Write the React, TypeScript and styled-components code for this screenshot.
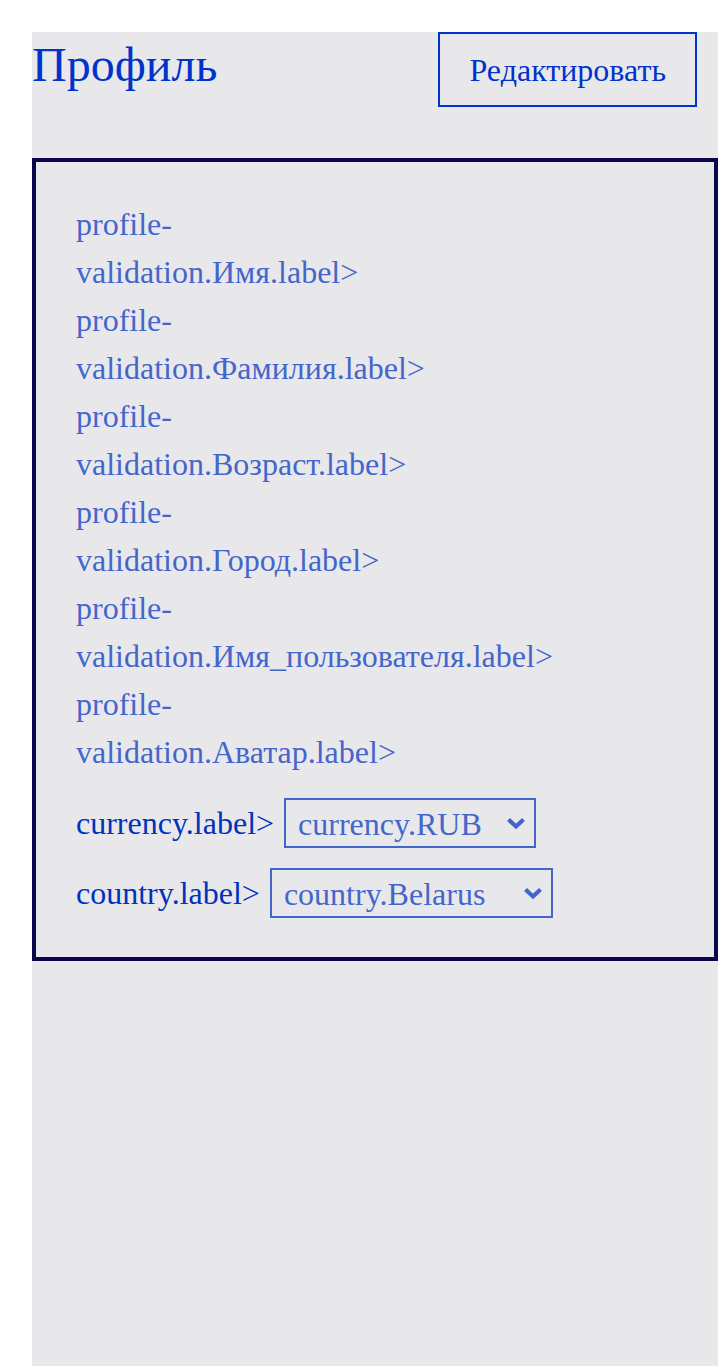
import React from 'react'
import styled, { createGlobalStyle } from 'styled-components'

const GlobalStyle = createGlobalStyle`
  html, body {
    margin: 0;
    padding: 0;
    background: #ffffff;
  }
  body {
    font-family: "Liberation Serif", "Times New Roman", serif;
  }
`

interface iSelect {
    w: number
    value: string
    options: string[]
}

const fields = ['Имя', 'Фамилия', 'Возраст', 'Город', 'Имя_пользователя', 'Аватар']

const Chevron = () => (
    <ChevronIcon width="20" height="13" viewBox="0 0 20 13">
        <polyline points="2.5,3 10,10 17.5,3" fill="none" stroke="#4466cc" strokeWidth="4.2" />
    </ChevronIcon>
)

const Select: React.FC<iSelect> = ({ w, value, options }) => {
    return (
        <SelectBox w={w}>
            <NativeSelect defaultValue={value}>
                {options.map((o) => (
                    <option key={o} value={o}>{o}</option>
                ))}
            </NativeSelect>
            <Chevron />
        </SelectBox>
    )
}

const App = () => {
    return (
        <>
            <GlobalStyle />
            <Wrap>
                <Page>
                    <Header>
                        <Title>Профиль</Title>
                        <EditButton>Редактировать</EditButton>
                    </Header>

                    <Card>
                        <FieldList>
                            {fields.map((f) => (
                                <Field key={f}>profile-validation.{f}.label&gt;</Field>
                            ))}
                        </FieldList>

                        <SelectRows>
                            <Row>
                                <RowLabel>currency.label&gt;</RowLabel>
                                <Select w={252} value="currency.RUB" options={['currency.RUB', 'currency.EUR', 'currency.USD']} />
                            </Row>
                            <Row>
                                <RowLabel>country.label&gt;</RowLabel>
                                <Select w={283} value="country.Belarus" options={['country.Russia', 'country.Belarus', 'country.Ukraine', 'country.Armenia']} />
                            </Row>
                        </SelectRows>
                    </Card>
                </Page>
            </Wrap>
        </>
    )
}

export default App


const Wrap = styled.div`
padding: 32px 0 0 32px;
`

const Page = styled.div`
width: 686px;
min-height: calc(100vh - 32px);
background-color: #e8e8eb;
`

const Header = styled.div`
display: flex;
align-items: baseline;
justify-content: space-between;
padding-right: 21px;
`

const Title = styled.h2`
margin: 0;
font-size: 48px;
font-weight: 400;
color: #0033cc;
`

const EditButton = styled.button`
font-family: "Liberation Serif", "Times New Roman", serif;
font-size: 32px;
color: #0033cc;
background: transparent;
border: 2px solid #0033cc;
padding: 18px 29px 16px;
cursor: pointer;
`

const Card = styled.div`
margin-top: 51px;
border: 4px solid #08084a;
padding: 38px 40px 39px;
`

const FieldList = styled.div`
display: flex;
flex-direction: column;
`

const Field = styled.div`
max-width: 300px;
font-size: 32px;
line-height: 48px;
color: #4466cc;
`

const SelectRows = styled.div`
display: flex;
flex-direction: column;
gap: 20px;
margin-top: 22px;
`

const Row = styled.label`
display: flex;
align-items: center;
gap: 10px;
`

const RowLabel = styled.span`
font-size: 32px;
color: #0033bb;
`

const SelectBox = styled.div<{ w: number }>`
position: relative;
width: ${({ w }) => w}px;
height: 50px;
box-sizing: border-box;
border: 2px solid #4466cc;
`

const NativeSelect = styled.select`
appearance: none;
-webkit-appearance: none;
width: 100%;
height: 100%;
border: none;
outline: none;
background: transparent;
font-family: "Liberation Serif", "Times New Roman", serif;
font-size: 32px;
color: #4466cc;
padding: 2px 40px 0 12px;
cursor: pointer;
`

const ChevronIcon = styled.svg`
position: absolute;
right: 8px;
top: 50%;
transform: translateY(-50%);
pointer-events: none;
`
